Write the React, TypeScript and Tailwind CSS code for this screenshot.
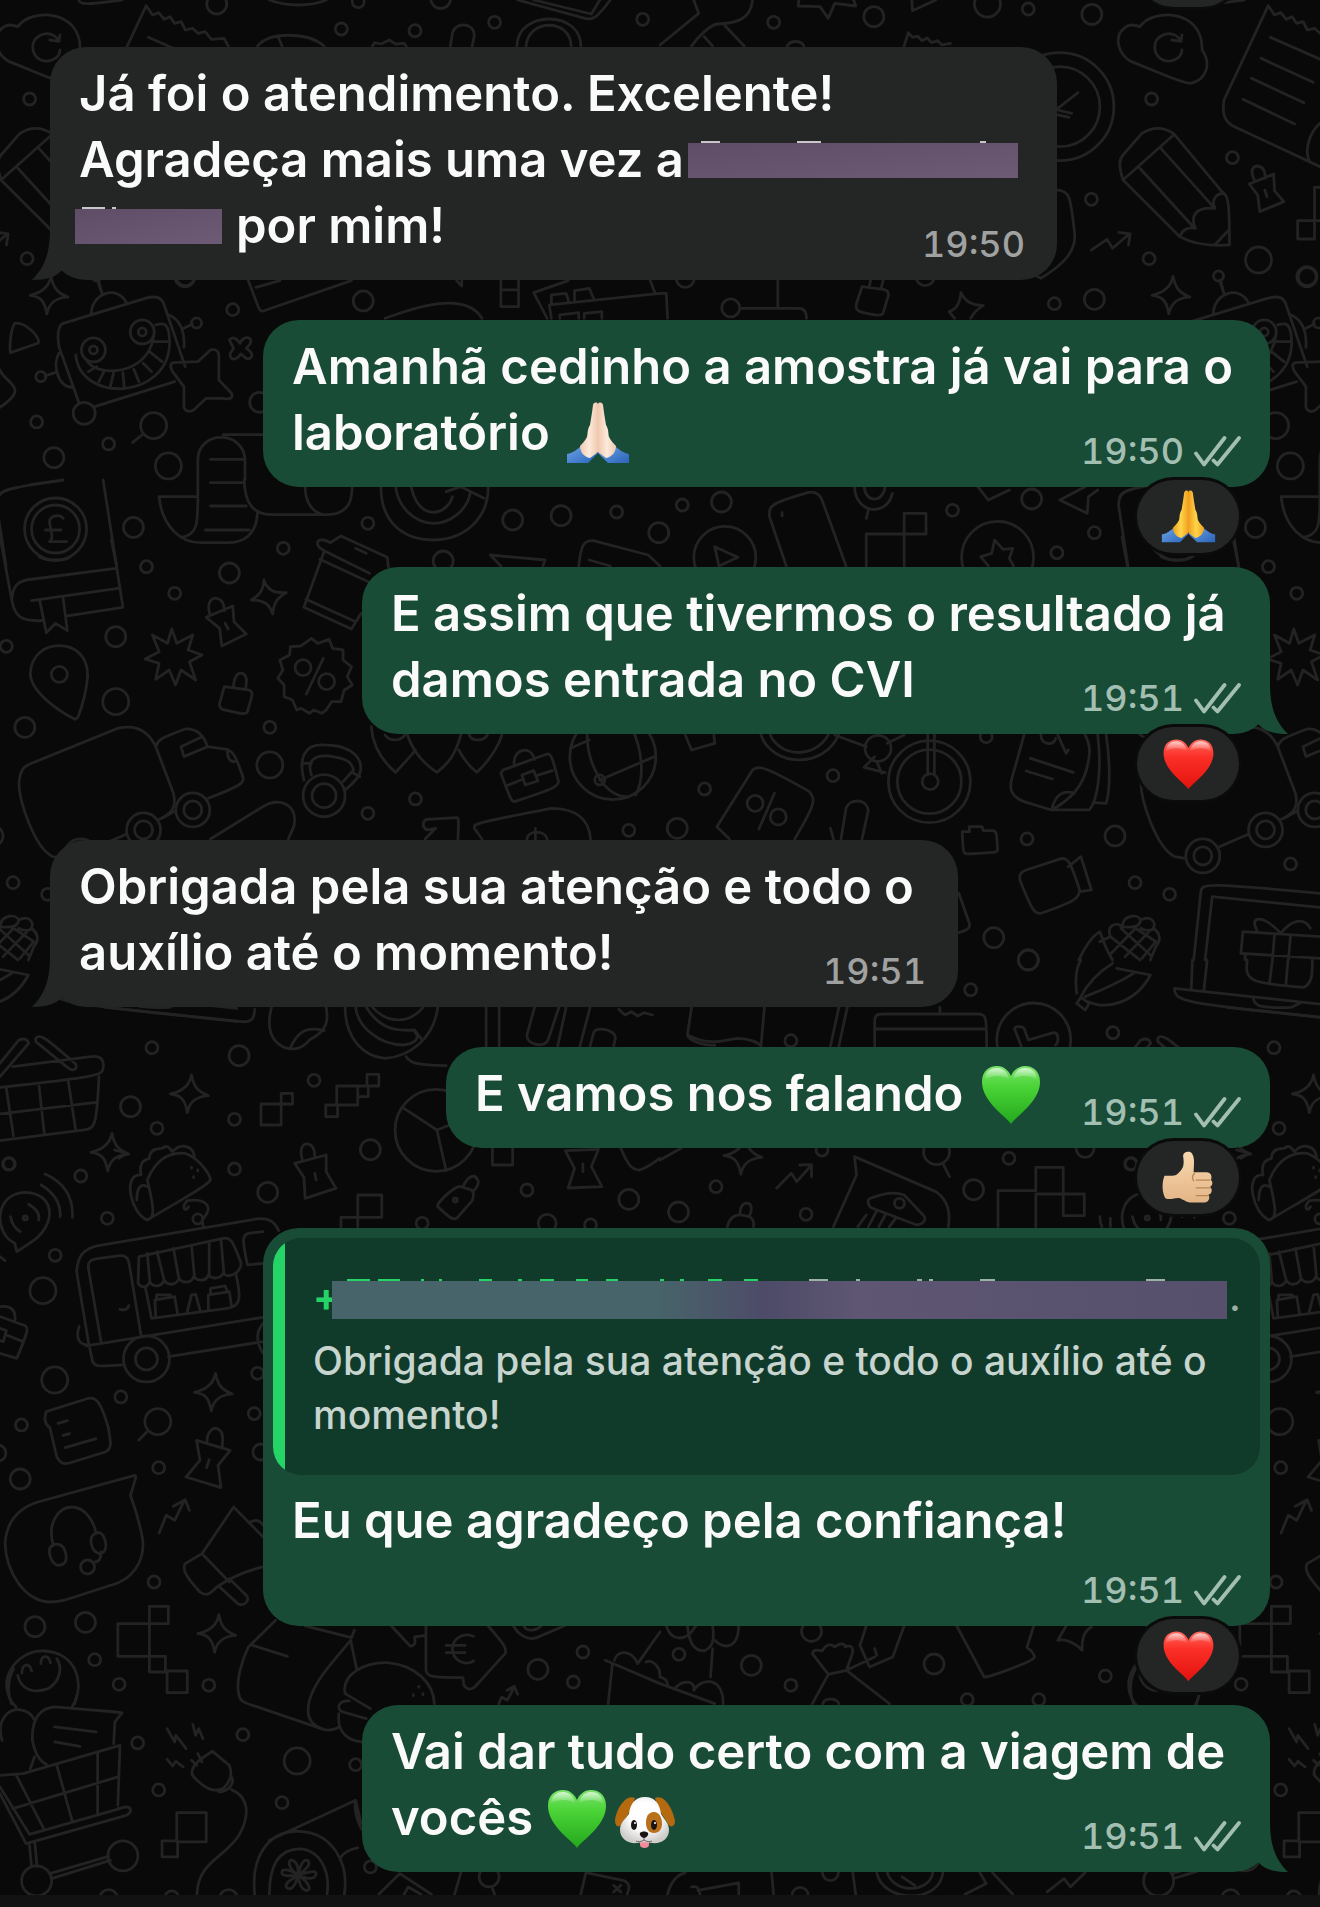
import React from 'react';

type Sender = 'me' | 'them';
type EmojiName = 'pray' | 'prayLight' | 'redHeart' | 'greenHeart' | 'thumb' | 'dog';

/* ---------- wallpaper ---------- */

// every patch is drawn on its own 1568x1440 grid, rings are [cx, cy, radius]
type Patch = { x: number; y: number; lines: string; rings: number[][]; sparkles?: number[][] };

const SPARKLE =
    'M455 345C460 380 470 395 495 407C465 410 450 425 445 458C440 420 430 405 405 402C430 395 450 380 455 345Z';

const PATCHES: Patch[] = [
    {
        x: 0,
        y: 0,
        lines: `M187 0C190 15 205 14 290 0M612 138C640 95 730 95 770 138M660 108L670 138
        M885 138L890 128L905 132L925 120L940 132L960 130L965 138M1070 138L1075 100C1080 65 1125 65 1127 105L1122 138
        M1228 138C1230 30 1380 30 1380 138M1250 138C1255 55 1355 55 1357 138
        M1230 0L1390 55C1410 62 1420 50 1450 0M1268 0L1405 42L1425 0M640 0C680 20 740 20 775 0
        M150 970L345 895C375 885 385 895 390 915L440 1100M415 1145L225 1220M188 1210L140 1040C135 1000 138 978 150 970
        M217 945C215 880 280 850 302 912M240 870L234 840
        M180 1065C190 1210 400 1200 403 1030C403 960 385 970 370 975M208 1085C230 1130 350 1130 365 1010
        M210 1115L230 1100M235 1145L248 1112M262 1160L270 1118M295 1160L292 1118M330 1145L318 1108M360 1115L340 1090M385 1085L355 1055M400 1025L364 1025
        M140 1060C125 1090 135 1160 172 1162M402 945C430 960 440 1000 437 1042M107 1128L130 1118M457 972L432 988
        M35 970C25 990 22 1040 25 1058L90 1030C100 1015 60 965 35 970ZM0 1110C10 1150 75 1160 0 1222
        M412 1088L470 1085L500 1050C515 1045 520 1055 520 1070L520 1140L550 1180C555 1195 545 1200 530 1195L490 1195L460 1230C445 1240 435 1230 437 1210L437 1160L410 1115C403 1100 405 1090 412 1088Z
        M545 1020C555 1005 565 1020 570 1030C580 1005 600 1010 595 1030L585 1045C605 1060 600 1080 585 1075L572 1062C560 1085 545 1080 547 1060L555 1045Z
        M340 1302L315 1328M470 1440V1380C470 1290 580 1290 582 1380V1440M500 1378H582M530 1304H625
        M590 842L615 925C618 935 625 935 632 930L835 842M608 862L665 842M915 955C1010 910 1110 880 1145 955
        M1085 842L1097 858V842M1190 842V920H1232V842M1190 870H1232M1300 955L1268 878L1350 842M1310 955L1305 915L1568 880M1545 842L1556 878
        M1310 912V885L1345 880L1352 908M1365 905V872L1400 865L1410 895M1330 955V945L1375 938V955M1388 955V940L1430 935V955`,
        rings: [
            [515, 12, 10], [811, 87, 6], [986, 92, 6], [851, 5, 6], [1047, -5, 10], [1175, 67, 6], [1527, 58, 6],
            [863, 903, 10], [553, 929, 6], [97, 1130, 5], [467, 969, 5], [200, 1240, 11], [87, 1266, 6],
            [365, 1277, 13], [258, 1332, 6], [128, 1373, 10], [400, 1398, 13], [440, 830, 9], [617, 1207, 10],
            [222, 1050, 12], [222, 1050, 4], [338, 996, 12], [338, 996, 4],
        ],
    },
    {
        x: 660,
        y: 0,
        lines: `M0 135L92 40L80 0M75 138C90 110 120 75 135 72C180 70 215 60 220 0M105 110L125 138M155 78L200 138
        M330 0L328 18L380 20L400 55L415 10L465 18L460 0M598 0L600 32L655 0M580 138L590 98L600 112L612 108L622 122L635 114L645 128L660 122L670 135L690 130
        M302 138C310 120 335 120 342 138M993 278L945 325M945 330L978 340M945 345L972 352
        M943 570C975 575 975 590 985 700C990 760 950 800 905 835L890 825
        M1140 80C1170 25 1290 25 1288 150C1310 190 1300 240 1260 250C1240 250 1200 225 1120 185C1090 165 1075 110 1105 82C1115 72 1130 75 1140 80Z
        M1240 150C1240 175 1215 190 1195 180C1170 165 1168 120 1195 105C1210 97 1225 100 1238 122M1240 105L1238 124L1216 120
        M1445 17L1460 45L1475 38L1488 58L1502 50L1512 70L1528 65L1538 90L1555 85L1568 100L1585 95L1600 118L1630 115L1640 138
        M1445 17L1340 300C1335 340 1340 365 1365 380L1568 500M1450 112L1600 195M1428 175L1552 247M1405 235L1530 308M1385 298L1508 372M1568 370C1540 400 1530 460 1545 487
        M1100 540C1090 500 1090 480 1100 465L1145 400C1170 380 1195 380 1220 400L1335 575C1350 585 1353 600 1353 735C1320 738 1270 735 1235 710L1100 540L1220 405M1140 505L1270 685M1190 445L1318 625
        M1235 710C1240 690 1255 680 1272 685C1260 650 1270 620 1318 625C1310 600 1320 580 1340 580M1353 688L1318 735
        M1412 540C1400 510 1410 498 1420 498C1435 500 1438 515 1438 535M1400 552L1458 522L1460 572L1482 605L1425 635L1420 585ZM1437 570L1442 590
        M1025 750L1062 718L1075 745L1115 702M1090 697L1117 702L1113 735M1515 662H1555V717H1515ZM1555 662V562H1600M1555 662H1600
        M1330 845L1340 880M0 880H15L18 955M280 842V925M190 925H330C345 925 348 940 348 955
        M480 860L530 868C540 870 543 875 543 885L530 940C525 948 515 948 475 935C465 930 465 920 467 910ZM497 862L500 842M525 866L530 842
        M715 878C725 905 740 915 768 917C750 930 742 945 738 955M715 878C712 910 705 928 687 935L700 955`,
        rings: [
            [270, 67, 6], [508, 50, 10], [778, 12, 13], [875, 27, 6], [1026, 43, 10], [1168, 297, 6], [1025, 598, 6],
            [1360, 473, 6], [1162, 776, 6], [1422, 780, 13], [1537, 830, 10], [937, 911, 6], [1032, 898, 10],
            [1327, 828, 5], [168, 924, 9], [60, 835, 9], [630, 830, 9], [950, 320, 54], [950, 320, 40],
        ],
        sparkles: [[764, 484]],
    },
    {
        x: 0,
        y: 480,
        lines: `M-5 50C0 35 10 30 70 15L150 0M245 0L292 382L160 408M28 360C30 320 40 300 80 297L275 265M28 360L0 170M28 360C35 410 50 425 100 422
        M75 362L280 325M95 365L110 458L132 430L160 452L150 355M150 115C140 100 115 108 118 130C122 160 128 175 118 185H158M108 150H145
        M378 50H470V0M378 50C385 140 430 190 480 188H540C590 188 610 150 612 95M470 50C470 130 470 165 430 172M500 8H578M500 78H585M488 150H592
        M580 0C582 70 600 105 650 104H780C840 100 835 40 837 20M725 20C725 70 745 100 770 104
        M905 20C905 130 960 180 1030 180C1100 180 1160 120 1160 20M940 20C945 80 985 130 1030 130C1070 130 1110 90 1117 40M977 20C985 70 1005 97 1030 97C1050 97 1070 75 1075 50M1060 35L1095 20L1150 55
        M755 185C760 175 770 178 785 188L810 168L920 232L923 262M755 185C752 195 760 205 770 212L878 280M770 215L722 382L835 447L858 400M760 238L875 305M727 358L845 425M845 205L870 220
        M627 300C635 330 650 340 680 338C655 355 650 375 648 402C640 370 625 360 597 360C620 345 627 325 627 300Z
        M498 400C490 365 505 352 515 355C530 358 533 375 533 392M490 412L553 378L556 425L585 462L527 498L522 445ZM535 430L542 447
        M408 447L420 490L458 465L447 510L480 525L450 545L465 600L430 570L417 615L402 570L370 598L378 550L345 537L378 515L362 465L398 490Z
        M178 718C150 700 72 640 72 580C75 520 110 497 140 497C180 497 210 530 208 590C205 640 195 680 185 712Z
        M533 620L590 630C598 632 600 640 598 650L588 695C585 702 580 702 570 700L528 688C520 682 520 675 523 665ZM555 622C555 590 565 577 575 580C585 583 588 600 583 628
        M740 475L755 490L782 478L790 505L815 510L815 540L835 560L825 590L837 615L818 630L810 665L788 665L775 690L765 700L745 690L735 700L715 685L705 690L695 660L675 650L675 615L660 595L672 570L665 540L688 525L690 500L715 498ZM768 535L728 642
        M45 910C48 870 55 860 75 850L280 745C330 730 355 760 370 800L412 940C420 980 410 1000 375 1020M45 910C45 960 80 1100 125 1130L150 1135M232 1100L300 1063
        M370 800C375 780 380 775 440 747C470 745 485 770 493 800L540 808C560 820 565 850 577 890C580 910 575 915 495 955M430 800L480 770M430 800L437 830L490 802M540 810C540 830 545 845 557 845M385 1015L418 992
        M500 1077L625 980C660 950 710 970 698 1040L685 1077
        M722 900C710 840 720 790 770 795C820 795 860 820 857 870C855 890 840 910 820 930M740 885C730 850 740 825 780 828C815 835 835 840 840 870L815 905M722 850H740M840 880L855 890
        M882 740C885 790 905 840 940 877C960 850 975 830 987 810M968 765C980 810 1005 850 1038 877C1065 850 1080 830 1095 765M1090 810C1105 845 1115 860 1133 877C1160 845 1185 800 1192 765M915 765C925 785 950 785 962 765M1115 765C1120 785 1150 785 1158 765
        M1195 870L1300 822C1310 822 1312 830 1327 905C1325 920 1320 925 1222 965C1215 965 1212 955 1190 880ZM1222 858C1215 810 1260 790 1270 838M1205 917L1243 897M1275 887L1312 872M1240 885L1268 872L1278 903L1248 915Z
        M1395 765C1395 840 1430 950 1490 950M1500 740C1530 820 1530 900 1510 945M1355 805L1400 780M1425 900L1555 830
        M1010 1077L1035 1045L1015 1050C1000 1040 1005 1020 1015 1018L1085 1013C1090 1013 1090 1020 1088 1077
        M1145 1077L1127 1045C1125 1030 1130 1030 1310 985C1370 985 1400 1020 1403 1077M1252 1077C1255 1050 1295 1050 1300 1077M1272 1045V1077
        M1190 258L1165 225L1295 240L1290 258M1375 258C1380 200 1385 180 1410 182L1540 225L1568 258M1400 240L1450 258`,
        rings: [
            [132, 147, 31], [132, 147, 24], [317, 142, 10], [874, 130, 6], [673, 205, 6], [348, 260, 6],
            [545, 279, 10], [415, 340, 6], [275, 470, 10], [15, 499, 6], [141, 583, 8], [275, 665, 13],
            [59, 742, 10], [641, 742, 6], [641, 855, 13], [987, 957, 6], [874, 1000, 6], [31, 1208, 6],
            [113, 1243, 6], [1218, 120, 10], [1333, 107, 10], [1465, 96, 6], [1053, 243, 10], [1494, 1051, 6],
            [720, 563, 8], [776, 605, 8], [458, 990, 17], [458, 990, 9], [341, 1050, 17], [341, 1050, 9],
            [192, 1128, 17], [192, 1128, 9], [770, 947, 21], [770, 947, 12], [1456, 830, 43], [1425, 900, 5],
        ],
    },
    {
        x: 660,
        y: 480,
        lines: `M130 200L185 232L140 258L130 200M300 258L260 110C258 75 265 70 350 38C370 32 380 45 385 60L442 258M290 98V108
        M462 20C465 105 540 110 552 40M485 20C488 70 530 70 535 20M495 90L490 115M490 258V162H580V100H632V162H580V258
        M780 258L762 230L788 220L795 180L815 208L838 205L830 235L840 258M755 20L780 60L830 30M1010 20L950 60L1015 100L1018 50L1040 30
        M1112 258L1090 80C1088 45 1100 30 1140 22M1362 180L1375 258M1190 230C1210 245 1250 245 1265 230
        M240 765C265 860 390 870 425 762M262 765C285 830 365 840 400 765M415 765L490 800M540 790L580 765M510 830L485 862L535 878M636 765V885M652 765V885M515 845L527 880
        M865 765L835 900C830 930 835 950 865 965L930 990C975 960 1005 920 1015 860C1025 810 1020 790 1010 765M930 990C940 940 960 930 985 940M1040 765C1050 870 1040 960 1020 990L930 990M1060 765C1070 850 1070 930 1060 970L1030 968M880 835L982 877M870 873L932 897M945 765L965 820L970 810M905 765C905 800 940 795 940 775
        M60 765L75 810L130 790L128 765M165 1077L135 1040L220 870C235 855 250 860 355 935C370 960 370 970 320 1077M272 940L235 1047
        M430 1077L442 985C450 955 490 955 495 990L480 1077M405 1045L412 1077
        M718 1055H735V1040H765L768 1052H790C800 1052 800 1060 802 1110C802 1118 795 1118 730 1122C720 1122 720 1115 718 1055Z
        M870 1170L955 1135C970 1135 975 1145 997 1230C997 1255 985 1265 905 1300C890 1302 885 1295 855 1200C853 1180 860 1175 870 1170ZM970 1160L1000 1130L1025 1230L998 1235
        M710 1240L735 1330C738 1345 730 1350 710 1358M1268 1440L1285 1235C1288 1210 1295 1208 1568 1240L1700 1256M1295 1440L1312 1250L1568 1282L1700 1298
        M1385 1355L1568 1370M1385 1355L1380 1420L1390 1422V1440M1380 1420L1568 1435M1460 1365L1455 1440M1498 1368L1493 1440M1475 1360C1430 1300 1400 1310 1418 1350M1475 1360C1500 1320 1530 1310 1545 1345
        M995 1440C1010 1400 1025 1370 1045 1355C1055 1390 1060 1410 1075 1440
        M1045 1385L1070 1370C1060 1335 1085 1325 1098 1340C1100 1305 1135 1300 1142 1320C1165 1305 1180 1325 1172 1345C1190 1360 1190 1385 1178 1400L1165 1440
        M1098 1340C1125 1345 1140 1340 1142 1320M1142 1345C1155 1355 1170 1352 1172 1345M1070 1370L1140 1440M1095 1345L1165 1425M1130 1345L1072 1420M1162 1355L1105 1430M1178 1385L1145 1435M1130 1345L1178 1385`,
        rings: [
            [53, 75, 6], [146, 66, 10], [-3, 158, 10], [695, 91, 6], [883, 57, 10], [1032, 158, 6], [943, 218, 6],
            [106, 927, 6], [411, 887, 6], [41, 1045, 10], [872, 1077, 6], [1081, 1068, 10], [1498, 1152, 6],
            [793, 1373, 10], [875, 1440, 10], [775, 770, 6], [154, 232, 31], [802, 232, 36], [640, 905, 41],
            [640, 905, 32], [642, 905, 8], [518, 805, 13], [226, 970, 8], [281, 1011, 8],
        ],
    },
    {
        x: 0,
        y: 960,
        lines: `M250 142L575 185C600 188 605 170 605 148M645 142C635 190 640 230 660 250C690 280 720 265 735 240C780 210 780 180 775 142M690 262C710 210 730 200 770 212
        M820 142C820 230 860 290 915 295C970 290 1030 240 1040 142M845 142C850 200 900 255 960 255C985 250 1000 235 985 215M870 142C900 200 930 215 985 210L1000 235M885 142C920 190 970 195 1005 142
        M1155 142V258M1186 142V258M965 290C975 310 990 315 1060 317M1270 142L1252 225C1250 255 1295 265 1302 240L1328 142M1345 142L1325 258M1402 142L1378 258M1402 258L1410 220C1415 195 1465 210 1462 235L1458 258M1470 148L1485 165L1500 155L1515 168L1530 158L1550 165
        M30 320L215 290C240 285 248 300 245 325C243 345 235 350 0 382M235 350C230 500 225 505 200 510L0 542M15 385L32 528M92 370L105 518M162 362L180 512M0 462L228 427M85 235C95 220 105 230 180 312C185 330 170 335 160 322L85 245ZM0 350L68 250C65 235 55 235 45 240L0 310
        M620 432H668V495H620ZM668 400H695V432H668ZM800 378H850V435H800ZM872 343H900V378H872ZM850 378H875V410H850ZM774 435H802V470H774Z
        M957 443L1038 510L1120 470M1038 510L1060 632
        M350 780C310 760 290 640 335 645C330 610 340 600 355 595C355 570 370 565 385 565C400 550 405 570 410 575C430 545 460 560 462 590M350 780C370 775 365 740 350 660C370 600 400 575 440 580C480 600 500 650 500 660C490 680 430 720 350 780M325 720C325 680 335 670 350 680M455 622v3M470 630v3M460 650v3
        M483 800L480 780C510 740 490 715 445 722C430 740 440 760 448 740
        M718 598C710 560 722 550 732 552C745 556 748 570 748 590M700 610L775 585L775 635L798 685L725 715L722 652ZM748 640L751 660
        M1040 740C1035 730 1085 672 1095 680L1120 690C1128 695 1125 710 1122 722L1085 775C1075 780 1070 775 1040 740ZM1100 680C1115 640 1130 645 1135 660C1140 670 1130 690 1122 695
        M850 705H907V772H850ZM810 800V772H850V800M1170 565V615H1218V565M1343 572L1422 568L1405 620L1430 680L1350 684L1365 625ZM1385 612V635M1475 565C1490 610 1500 630 1520 630C1545 620 1560 600 1568 595
        M40 875L35 850C-15 820 -15 700 60 697C135 700 135 800 70 850ZM25 770C28 790 35 805 48 815M68 733C85 745 95 760 92 780M98 675C130 700 145 730 143 770M107 642C150 665 175 710 172 772M0 890L12 902
        M210 1145L182 935C185 890 195 870 230 858L610 777C640 772 655 790 662 812M240 1145L210 925C208 905 215 898 235 895L285 887C300 885 305 895 308 920L335 1125M285 1048C295 1052 302 1050 306 1037
        M328 970L330 890L530 835C550 830 555 850 573 910M328 970C335 985 350 985 356 965C365 985 385 980 390 960C400 980 420 975 425 955C435 972 455 970 460 950C470 965 490 965 495 945C505 960 525 955 530 940C540 955 570 945 573 910M350 880L356 965M373 875L390 960M412 865L425 955M455 855L462 950M497 847V945M525 840L532 940
        M345 980L360 1075L540 1045C570 1040 575 1020 560 940M625 815L590 820C575 825 575 840 588 915L625 910M370 1070L368 1020L415 1010L422 1062M372 1020V1005H405V1012M445 1055L455 1005L465 1003L475 1050M495 1048V1005L545 995L550 1040M500 1003V985L535 978L540 995
        M205 1158L625 1072M400 1190L625 1145M210 1145L220 1205C225 1220 235 1220 290 1215M188 1100C180 1130 185 1155 210 1155M625 1090C605 1120 610 1150 625 1180
        M0 1070L55 1095C70 1100 68 1110 40 1195L0 1180M0 1040C25 1035 40 1050 35 1085M0 1105L15 1112L8 1145L0 1142M15 1125L55 1145
        M110 1355L210 1315C230 1310 240 1330 257 1401M110 1355C105 1370 105 1390 116 1401M138 1390L160 1382M350 1415L330 1440`,
        rings: [
            [361, 263, 6], [568, 287, 10], [746, 361, 6], [310, 440, 10], [557, 478, 6], [373, 505, 6],
            [22, 611, 6], [192, 648, 6], [557, 627, 6], [636, 697, 10], [255, 775, 6], [131, 886, 6],
            [102, 992, 13], [880, 569, 10], [130, 1260, 13], [287, 1311, 6], [375, 1385, 13], [51, 1395, 6],
            [604, 1361, 6], [612, 1240, 6], [1252, 690, 6], [1494, 718, 10], [1003, 790, 6], [1300, 790, 9],
            [1403, 795, 6], [1036, 511, 41], [470, 777, 5], [1082, 720, 2], [60, 774, 2], [348, 1197, 23],
            [348, 1197, 11],
        ],
        sparkles: [[0, 0], [-189, 175], [57, 895]],
    },
    {
        x: 660,
        y: 960,
        lines: `M75 142L65 225C120 260 150 240 185 235C215 235 235 250 240 258M65 225C70 245 110 258 130 255M248 142L240 258M425 142L405 258M445 142L425 258
        M510 258V185C510 165 515 162 530 162H755C775 162 776 170 776 258M510 207H775M665 142V162
        M842 205C845 198 860 198 865 205L875 240L935 218C948 218 948 245 940 255M842 205L858 258
        M990 100C985 50 990 20 1000 0M1018 125C1060 150 1130 130 1165 45L1085 25M1000 110C1020 60 1050 30 1075 10M1010 110C1050 90 1100 60 1125 40M990 130L1010 150L1020 130L1000 112Z
        M1222 85C1225 125 1235 128 1568 172L1660 184M1222 85L1660 145M1265 0L1262 90M1300 0L1292 92M1410 118C1415 140 1430 145 1500 142L1520 130M1395 0C1390 60 1395 70 1530 82C1550 70 1550 40 1550 0M1455 0L1448 70M1492 0L1487 75
        M0 600L50 565M277 685L312 640L325 665L360 615M332 615L360 614V650M672 610L688 650
        M412 800L467 645L462 590L655 695C685 720 690 760 685 800M500 715C490 720 495 740 505 745L610 795C635 790 630 770 625 765L580 705C560 695 530 700 500 715ZM490 765L470 800M515 752L495 800M535 765L520 800M560 775L545 800
        M160 800C165 775 175 765 190 765C220 768 225 780 222 800M190 765C190 735 200 727 210 730C220 735 218 755 212 768
        M803 800V692H893V622H958V702H1008V767H958V702H893V800M1045 770C1045 785 1048 795 1050 800M1070 775V800M1370 570L1400 580L1380 595`,
        rings: [
            [738, 89, 6], [311, 242, 6], [1076, 218, 6], [829, 595, 6], [745, 689, 10], [133, 680, 6],
            [44, 756, 10], [347, 763, 6], [385, 570, 6], [875, 0, 10], [1010, 565, 9], [1118, 612, 6],
            [657, 575, 13], [888, 240, 37], [569, 730, 5],
        ],
        sparkles: [[-253, 185]],
    },
    {
        x: 0,
        y: 1427,
        lines: `M118 0L135 90C145 110 150 112 165 108L250 75C265 65 265 55 257 0M150 25L165 20M155 62L228 35
        M492 50C490 10 510 0 515 5C530 10 530 30 528 58M467 40L547 70L518 115L525 182L442 150L475 100ZM497 98L491 122
        M320 145L90 225C40 245 15 290 12 350C15 440 60 520 115 525C150 525 150 520 280 468C330 440 345 380 338 330C330 280 320 240 310 205L322 155C323 147 322 145 320 145Z
        M127 355C110 290 140 240 170 240C205 240 225 290 228 320M240 375C240 395 235 405 225 405M125 355C110 365 120 410 137 415C158 415 160 395 155 375C150 350 135 348 125 355ZM225 320C210 330 215 370 235 380C255 378 255 350 245 325C238 315 230 316 225 320Z
        M378 318L395 265L415 280L438 220M412 238L440 218L450 250
        M555 240L480 380L440 410C430 430 450 460 475 495C490 510 500 500 515 480C550 450 590 430 625 420M480 380L545 465M555 240L625 330M595 285C610 275 620 285 625 295M522 480L565 530C580 540 595 520 585 505L545 455
        M355 538H400V590H355ZM280 590H355V688H280ZM355 688H393V735H355ZM397 732H445V797H397Z
        M38 840C-15 770 35 670 104 672C180 675 205 770 172 838M42 745C50 790 80 800 115 785C145 760 148 720 135 695M52 738C52 710 70 705 75 732M97 710C97 685 115 680 120 708
        M5 940C-10 880 20 845 45 848C65 850 75 860 82 880M290 858C270 852 260 855 130 840C90 845 75 880 77 940C82 975 90 1000 110 1012M290 858L273 885L270 950M130 900L228 915M130 945L190 958M82 990L72 1025
        M0 1045L55 1040L285 955L280 1135M285 1145L70 1222L0 1080M40 1048L105 1208M135 1015L172 1185M232 975V1160M30 1145L280 1050M0 1100L62 1250L300 1165C315 1155 312 1140 300 1140L280 1145M70 1255L75 1320M83 1250L88 1318M118 1340L258 1288M122 1355L262 1300
        M397 905L415 945L418 925L442 965M458 892L465 925L472 905L482 935M397 997L410 1017L418 1003L435 1020
        M505 973L545 1015C552 1040 550 1060 530 1085C510 1095 490 1092 457 1045C452 1020 470 1000 505 973ZM480 1005L470 980M467 1015L455 1000M550 1050C560 1070 540 1095 520 1095M550 1088C590 1110 595 1160 570 1220C540 1290 470 1300 468 1402
        M420 1157H490V1245H420ZM385 1242H422V1290H385Z
        M605 1402C595 1270 650 1210 710 1213C790 1215 830 1310 818 1402M640 1402C640 1320 660 1268 710 1266C760 1268 785 1330 777 1402
        M708 1345C680 1320 685 1295 695 1300C710 1310 708 1330 708 1345C712 1320 720 1295 730 1300C742 1310 725 1330 708 1345C740 1330 755 1330 750 1345C745 1360 725 1355 708 1345C740 1370 740 1395 725 1390C715 1385 710 1365 708 1345C700 1390 685 1390 680 1380C675 1365 700 1355 708 1345C670 1350 665 1340 672 1330C680 1325 700 1335 708 1345
        M640 1240L845 1120L858 1190M845 1120C840 1150 850 1190 862 1210M810 1290C820 1270 840 1265 850 1262
        M655 580L590 660C575 700 560 760 567 800C570 820 575 825 600 835L770 908C790 912 800 905 805 900M725 597L835 632L842 610M833 640C780 720 750 760 735 820C728 860 730 890 770 908M833 640L848 730M600 655L683 688
        M820 800C810 740 870 705 920 707C990 715 1030 770 1032 830M820 800L880 845M830 822C800 820 800 850 815 855L870 875M805 860C800 920 830 940 858 945M995 778v3M982 803v3M1005 800v3
        M930 597L975 658C985 655 988 650 985 630L1012 625M1012 597V730C1015 750 1025 752 1100 752L1102 775C1110 790 1120 788 1128 780L1200 680C1205 665 1200 655 1160 597M1125 628C1100 615 1075 635 1075 665C1075 700 1105 718 1125 702M1060 655H1105M1060 677H1105
        M1220 597C1235 630 1260 640 1275 632L1340 597M1245 597C1250 615 1275 612 1285 597M1185 830L1192 810L1205 820L1222 780M1205 790L1222 778L1230 802
        M1445 830L1455 710M1438 700L1568 770M1460 700C1465 670 1500 665 1515 710L1568 615M1535 705C1550 695 1568 720 1568 745
        M900 1402L950 1340L1025 1402M960 1402L970 1380L1000 1402M1095 1337L1080 1402M1170 1385L1175 1402M1380 1402L1392 1337L1480 1360C1500 1370 1495 1385 1490 1402M1458 1375L1475 1395M1475 1375L1458 1395`,
        rings: [
            [48, 156, 10], [377, 122, 6], [366, 465, 6], [83, 599, 10], [203, 586, 10], [225, 698, 6],
            [283, 772, 6], [496, 775, 6], [327, 948, 6], [577, 923, 6], [706, 1002, 13], [845, 1013, 6],
            [377, 1089, 6], [670, 1127, 6], [1278, 727, 10], [1385, 675, 6], [1362, 765, 6], [-5, 78, 8],
            [620, 75, 8], [880, 1320, 6], [258, 1415, 9], [408, 1413, 7], [543, 1415, 9], [1162, 1350, 10],
            [208, 420, 7], [87, 1362, 15], [292, 1287, 15],
        ],
        sparkles: [[65, 218]],
    },
    {
        x: 660,
        y: 1427,
        lines: `M15 597C25 640 60 650 85 597M65 597C70 650 80 670 105 672C125 660 130 640 125 597M130 640C150 665 185 670 187 597M125 665L120 750M0 770L130 830M38 780C60 755 85 765 80 790C100 750 150 750 150 830M0 750C15 755 18 765 18 775
        M400 742L362 680C365 665 375 670 385 672C395 650 410 650 415 660C430 645 440 650 440 660C455 650 460 665 457 680L443 730ZM400 742L362 830M443 730L545 830M443 730L510 690M510 665L515 685
        M490 597L475 655L498 720L553 690L580 597M387 830C390 812 420 812 425 830M705 597L770 750C780 752 885 705 890 690C885 665 870 665 872 660L888 597
        M965 597L945 640C965 635 990 650 1003 670C1002 640 1005 615 1025 600M1130 725C1115 760 1115 800 1125 830M1280 805L1275 830
        M18 1402C25 1365 40 1345 60 1337M75 1380C90 1375 92 1385 95 1402M90 1390L187 1368V1402M265 1337L270 1402M458 1337L465 1402M515 1337C530 1430 665 1430 672 1337M540 1337C555 1400 640 1400 648 1337M575 1350L605 1375
        M725 1402L775 1370L760 1337M790 1337L838 1402M920 1395L960 1355L975 1380L1010 1337`,
        rings: [
            [360, 613, 10], [45, 682, 6], [217, 715, 10], [311, 775, 6], [651, 711, 10], [1058, 747, 6],
            [730, 818, 6], [900, 818, 6], [333, 1405, 8], [405, 1337, 8],
        ],
    },
];

const Wallpaper = () => (
    <svg
        aria-hidden="true"
        viewBox="0 0 1320 1907"
        preserveAspectRatio="xMidYMin slice"
        className="absolute inset-0 h-full w-full"
        fill="none"
        stroke="#222322"
        strokeWidth="2.8"
        strokeLinecap="round"
        strokeLinejoin="round"
    >
        <g id="doodles">
            {PATCHES.map((patch, i) => (
                <g key={i} transform={`translate(${patch.x} ${patch.y}) scale(0.4209 0.3333)`}>
                    <path d={patch.lines} vectorEffect="non-scaling-stroke" />
                    {patch.rings.map(([cx, cy, r], j) => (
                        <ellipse key={j} cx={cx} cy={cy} rx={r * 2.376} ry={r * 3} vectorEffect="non-scaling-stroke" />
                    ))}
                    {(patch.sparkles ?? []).map(([x, y], j) => (
                        <path key={j} d={SPARKLE} transform={`translate(${x} ${y})`} vectorEffect="non-scaling-stroke" />
                    ))}
                </g>
            ))}
        </g>
        <use href="#doodles" x="1122" />
        <use href="#doodles" x="-1122" />
    </svg>
);

/* ---------- emoji ---------- */

const HEART = 'M32 62C28 55 3 40 3 20C3 8 11 4 18 4C25 4 30 9 32 14C34 9 39 4 46 4C53 4 61 8 61 20C61 40 36 55 32 62Z';

const Heart = ({ id, top, mid, low }: { id: string; top: string; mid: string; low: string }) => (
    <>
        <defs>
            <linearGradient id={id} x1="0" y1="0" x2="0" y2="1">
                <stop offset="0" stopColor={top} />
                <stop offset="0.35" stopColor={mid} />
                <stop offset="1" stopColor={low} />
            </linearGradient>
            <linearGradient id={`${id}-shine`} x1="0" y1="0" x2="0" y2="1">
                <stop offset="0" stopColor="#fff" stopOpacity="0.7" />
                <stop offset="1" stopColor="#fff" stopOpacity="0" />
            </linearGradient>
        </defs>
        <path d={HEART} fill={`url(#${id})`} />
        <path d="M6 18C6 9 12 6 18 6C25 6 29 11 30 17C22 13 13 13 6 18Z" fill={`url(#${id}-shine)`} />
        <path d="M58 18C58 9 52 6 46 6C39 6 35 11 34 17C42 13 51 13 58 18Z" fill={`url(#${id}-shine)`} />
    </>
);

const Hands = ({ id, skin, shade }: { id: string; skin: string; shade: string }) => (
    <>
        <defs>
            <linearGradient id={id} x1="0" y1="0" x2="1" y2="0">
                <stop offset="0" stopColor={shade} />
                <stop offset="0.5" stopColor={skin} />
                <stop offset="1" stopColor={shade} />
            </linearGradient>
            <linearGradient id={`${id}-cuff`} x1="0" y1="0" x2="1" y2="1">
                <stop offset="0" stopColor="#6ea5ea" />
                <stop offset="1" stopColor="#2a63b8" />
            </linearGradient>
        </defs>
        <path d="M32 52L22 62H1V53C7 52 12 48 16 44L28 47Z" fill={`url(#${id}-cuff)`} />
        <path d="M32 52L42 62H63V53C57 52 52 48 48 44L36 47Z" fill={`url(#${id}-cuff)`} />
        <path d="M32 3C31 1 28 1 27 4C26 12 25 18 24 24C21 29 22 32 21 36C19 40 16 43 14 45C14 51 18 56 24 57L32 51Z" fill={`url(#${id})`} />
        <path d="M32 3C33 1 36 1 37 4C38 12 39 18 40 24C43 29 42 32 43 36C45 40 48 43 50 45C50 51 46 56 40 57L32 51Z" fill={`url(#${id})`} />
        <path d="M32 4V50" stroke={shade} strokeWidth="1.4" />
    </>
);

const Thumb = () => (
    <>
        <defs>
            <linearGradient id="thumb" x1="0" y1="0" x2="0" y2="1">
                <stop offset="0" stopColor="#f8d9ae" />
                <stop offset="1" stopColor="#e3b587" />
            </linearGradient>
        </defs>
        <path
            d="M32 2C27 2 25 5 26 9C27 17 26 21 22 25C19 29 16 30 13 30H4C1 38 1 49 5 56C11 59 16 55 22 56C27 58 30 61 35 61H51C57 60 57 54 55 52C60 51 60 45 57 43C61 41 60 36 58 35C60 31 58 26 53 26H38C38 20 39 14 38 9C37 4 35 2 32 2Z"
            fill="url(#thumb)"
        />
        <path d="M57 35H41M57 44H41M55 53H41M39 27C36 30 36 33 38 36" stroke="#b98654" strokeWidth="1.5" fill="none" strokeLinecap="round" />
    </>
);

const Dog = () => (
    <>
        <defs>
            <radialGradient id="dog" cx="0.5" cy="0.4" r="0.6">
                <stop offset="0.5" stopColor="#fff" />
                <stop offset="1" stopColor="#cfcdcc" />
            </radialGradient>
        </defs>
        <path d="M22 12C12 8 3 24 2 35C2 42 8 42 10 36L18 24Z" fill="#b56a10" />
        <path d="M42 12C52 8 60 24 62 35C62 42 56 42 54 36L46 24Z" fill="#b56a10" />
        <path d="M27 54V59C27 63 36 63 36 59V54Z" fill="#f48a9c" />
        <path d="M32 11C22 11 17 18 16 28C12 33 7 37 7 44C7 53 16 58 24 57C29 56 34 56 39 57C48 58 56 53 56 44C56 37 51 33 48 28C47 18 42 11 32 11Z" fill="url(#dog)" />
        <path d="M41 26C35 26 33 31 33 37C33 43 36 47 41 47C46 47 49 43 49 38C49 31 46 26 41 26Z" fill="#b8701a" />
        <ellipse cx="21" cy="39" rx="3" ry="5" fill="#1b1413" />
        <ellipse cx="41" cy="39" rx="3" ry="5" fill="#1b1413" />
        <circle cx="22" cy="37" r="1" fill="#fff" />
        <circle cx="42" cy="37" r="1" fill="#fff" />
        <path d="M27 47C29 45 33 45 35 47C36 49 33 52 31 52C29 52 26 49 27 47Z" fill="#1b1413" />
        <path d="M31 52V54M31 54C28 56 25 56 23 55M31 54C34 56 37 56 39 55" stroke="#6d625f" strokeWidth="1" fill="none" />
    </>
);

const EMOJI_LABELS: Record<EmojiName, string> = {
    pray: '🙏',
    prayLight: '🙏🏻',
    redHeart: '❤️',
    greenHeart: '💚',
    thumb: '👍🏼',
    dog: '🐶',
};

const Emoji = ({ name, className }: { name: EmojiName; className: string }) => (
    <svg viewBox="0 0 64 64" role="img" aria-label={EMOJI_LABELS[name]} className={`shrink-0 ${className}`}>
        {name === 'pray' && <Hands id="pray" skin="#ffd54a" shade="#f0a020" />}
        {name === 'prayLight' && <Hands id="pray-light" skin="#fdeadb" shade="#efc9ae" />}
        {name === 'redHeart' && <Heart id="red" top="#ff6a60" mid="#fb2f27" low="#e3120c" />}
        {name === 'greenHeart' && <Heart id="green" top="#7be36d" mid="#4bd437" low="#23a81c" />}
        {name === 'thumb' && <Thumb />}
        {name === 'dog' && <Dog />}
    </svg>
);

/* ---------- chat ---------- */

const Ticks = () => (
    <svg viewBox="0 0 47 31" className="h-[31px] w-[47px]" fill="none" stroke="#a3bfb1" strokeWidth="3.8" strokeLinecap="round" strokeLinejoin="round" role="img" aria-label="Entregue">
        <path d="M2 17.5L10 28.5L30.5 2" />
        <path d="M19.5 24.5L23.5 28.5L45 2" />
    </svg>
);

const Meta = ({ time, from }: { time: string; from: Sender }) => (
    <div className="flex shrink-0 items-center gap-2.5 self-end">
        <time className={`text-[36px] leading-10 font-medium tabular-nums ${from === 'me' ? 'text-[#a3bfb1]' : 'text-[#a0a1a1]'}`}>
            {time}
        </time>
        {from === 'me' && <Ticks />}
    </div>
);

const Tail = ({ from }: { from: Sender }) => (
    <svg
        viewBox="0 0 40 50"
        aria-hidden="true"
        className={`absolute bottom-0 h-[50px] w-10 ${from === 'me' ? '-right-[18px] -scale-x-100 fill-[#194c37]' : '-left-[18px] fill-[#242625]'}`}
    >
        <path d="M18 0C18 24 12 38 0 50C14 50 24 47 29 41L40 30V0Z" />
    </svg>
);

type BubbleProps = {
    from: Sender;
    time: string;
    width: string;
    tail?: boolean;
    children?: React.ReactNode;
    lastLine: React.ReactNode;
};

const Bubble = ({ from, time, width, tail, children, lastLine }: BubbleProps) => (
    <article
        className={`relative max-w-full rounded-[36px] pt-3.5 pb-4 pl-[29px] ${width} ${
            from === 'me' ? 'self-end bg-[#194c37] pr-[29px]' : 'self-start bg-[#242625] pr-8'
        }`}
    >
        {tail && <Tail from={from} />}
        {children}
        <div className="flex justify-between">
            <div className="mb-[5px] flex h-[66px] items-center">{lastLine}</div>
            <Meta time={time} from={from} />
        </div>
    </article>
);

const Reaction = ({ name, className = '' }: { name: EmojiName; className?: string }) => (
    <button
        type="button"
        className={`relative mr-[31px] flex h-[73px] w-[102px] shrink-0 items-center justify-center self-end rounded-full bg-[#242625] ring-3 ring-[#0a0b0a] ${className}`}
    >
        <Emoji name={name} className="size-[55px]" />
    </button>
);

// blurred-out name, with the tops of a few letters left showing
const Redacted = ({ className, tops, color }: { className: string; tops: string; color: string }) => (
    <span className={`relative block shrink-0 ${className}`}>
        <svg className="absolute -top-[2px] left-0 h-[2px] w-full" stroke={color} strokeWidth="3" aria-hidden="true">
            <path d={tops} />
        </svg>
    </span>
);

const App = () => {
    return (
        <main className="relative min-h-screen overflow-hidden bg-[#090909] font-['Inter',sans-serif]">
            <Wallpaper />
            <div className="relative flex flex-col px-[50px] pb-[23px] text-[49px] leading-[66px] font-semibold text-[#fafafa]">
                <Reaction name="redHeart" className="-mt-[66px]" />

                <Bubble
                    from="them"
                    time="19:50"
                    width="mt-10 w-[1007px]"
                    tail
                    lastLine={
                        <>
                            <Redacted
                                className="-ml-1 h-[35px] w-[147px] bg-gradient-to-br from-[#5f4d68] to-[#6d5a75]"
                                tops="M7 1H30M37 1H41"
                                color="#c9c5cb"
                            />
                            <span className="ml-3.5">por mim!</span>
                        </>
                    }
                >
                    <p>Já foi o atendimento. Excelente!</p>
                    <p className="flex items-center">
                        Agradeça mais uma vez a
                        <Redacted
                            className="ml-1 h-[35px] w-[330px] bg-gradient-to-br from-[#5f4d68] to-[#6d5a75]"
                            tops="M13 1H32M109 1H133M292 1H298"
                            color="#c9c5cb"
                        />
                    </p>
                </Bubble>

                <Bubble
                    from="me"
                    time="19:50"
                    width="mt-10 w-[1007px]"
                    lastLine={
                        <>
                            laboratório
                            <Emoji name="prayLight" className="ml-4 size-16" />
                        </>
                    }
                >
                    <p>Amanhã cedinho a amostra já vai para o</p>
                </Bubble>
                <Reaction name="pray" className="-mt-[7px]" />

                <Bubble from="me" time="19:51" width="mt-3.5 w-[908px]" tail lastLine="damos entrada no CVI">
                    <p>E assim que tivermos o resultado já</p>
                </Bubble>
                <Reaction name="redHeart" className="-mt-[7px]" />

                <Bubble from="them" time="19:51" width="mt-10 w-[908px]" tail lastLine="auxílio até o momento!">
                    <p>Obrigada pela sua atenção e todo o</p>
                </Bubble>

                <Bubble
                    from="me"
                    time="19:51"
                    width="mt-10 w-[824px]"
                    lastLine={
                        <>
                            E vamos nos falando
                            <Emoji name="greenHeart" className="ml-4 size-16" />
                        </>
                    }
                />
                <Reaction name="thumb" className="-mt-[7px]" />

                <article className="relative mt-3.5 flex w-[1007px] max-w-full flex-col self-end rounded-[36px] bg-[#194c37] pt-2.5 pb-4">
                    <blockquote className="mx-2.5 flex overflow-hidden rounded-[28px] bg-[#103b2b]">
                        <div className="w-3 shrink-0 bg-[#25d366]" />
                        <div className="min-w-0 flex-1 pt-8 pb-[33px] pl-7 text-[39px] leading-[54px] font-medium text-[#c7d5ce]">
                            <div className="mb-2.5 flex items-end text-[#9db1a7]">
                                <span className="w-[19px] shrink-0 font-bold text-[#25d366]">+</span>
                                <Redacted
                                    className="mb-[5px] h-[38px] w-[432px] bg-gradient-to-r from-[#466469] from-75% to-[#4d4b68]"
                                    tops="M15 1H38M46 1H68M89 1H92M107 1H110M147 1H160M186 1H190M208 1H222M244 1H256M274 1H286M328 1H332M348 1H352M376 1H390M412 1H426"
                                    color="#25d366"
                                />
                                <Redacted
                                    className="mb-[5px] h-[38px] w-[463px] bg-gradient-to-r from-[#4d4b68] via-[#5e5672] via-20% to-[#56506d]"
                                    tops="M45 1H64M92 1H96M153 1H158M165 1H169M216 1H231M382 1H401"
                                    color="#9db1a7"
                                />
                                <span className="ml-0.5">.</span>
                            </div>
                            <p>
                                Obrigada pela sua atenção e todo o auxílio até o
                                <br />
                                momento!
                            </p>
                        </div>
                    </blockquote>
                    <p className="mt-[13px] pl-[29px]">Eu que agradeço pela confiança!</p>
                    <div className="mt-4 flex justify-end pr-[29px]">
                        <Meta time="19:51" from="me" />
                    </div>
                </article>
                <Reaction name="redHeart" className="-mt-[7px]" />

                <Bubble
                    from="me"
                    time="19:51"
                    width="mt-[13px] w-[908px]"
                    tail
                    lastLine={
                        <>
                            vocês
                            <Emoji name="greenHeart" className="ml-3 size-16" />
                            <Emoji name="dog" className="ml-1 size-16" />
                        </>
                    }
                >
                    <p>Vai dar tudo certo com a viagem de</p>
                </Bubble>
            </div>
            <footer className="relative h-3 bg-[#121212]" />
        </main>
    );
};

export default App;
